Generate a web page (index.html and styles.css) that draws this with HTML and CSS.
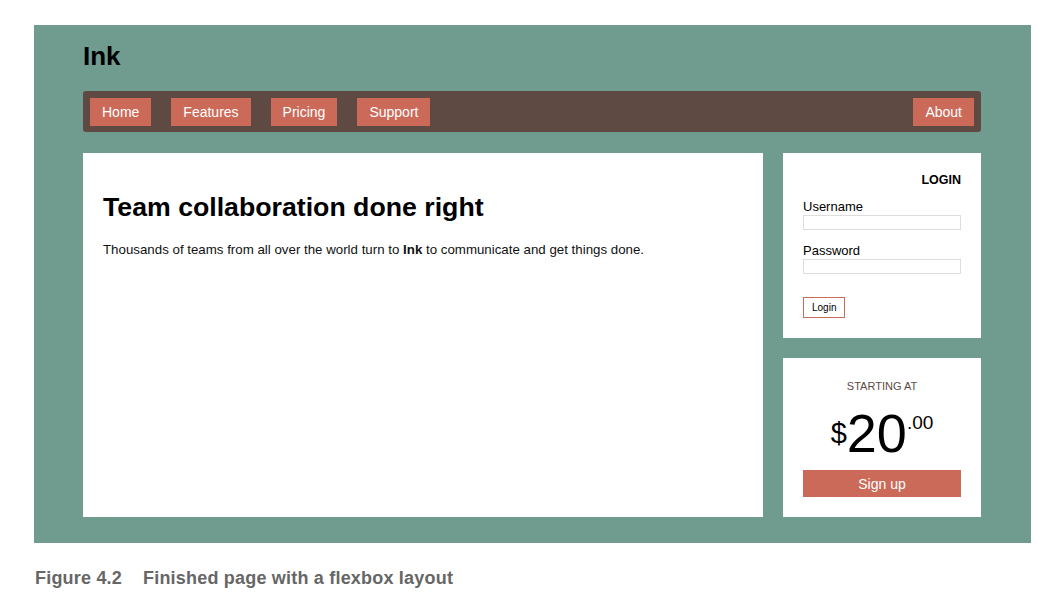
FILE: index.html
```html
<!DOCTYPE html>
<html>
<head>
<meta charset="utf-8">
<link rel="stylesheet" href="styles.css">
</head>
<body>
<div class="figure">
  <div class="page">
    <header class="site-header">
      <h1 class="logo">Ink</h1>
    </header>
    <nav class="nav">
      <a class="nav-btn">Home</a>
      <a class="nav-btn">Features</a>
      <a class="nav-btn">Pricing</a>
      <a class="nav-btn">Support</a>
      <a class="nav-btn nav-right">About</a>
    </nav>
    <div class="main-row">
      <main class="hero">
        <h2 class="hero-title">Team collaboration done right</h2>
        <p class="hero-text">Thousands of teams from all over the world turn to <b>Ink</b> to communicate and get things done.</p>
      </main>
      <aside class="sidebar">
        <div class="card login">
          <div class="login-title">LOGIN</div>
          <label class="field-label">Username</label>
          <div class="input"></div>
          <label class="field-label">Password</label>
          <div class="input"></div>
          <button class="login-btn">Login</button>
        </div>
        <div class="card pricing">
          <div class="starting">STARTING AT</div>
          <div class="price"><span class="cur">$</span><span class="amount">20</span><span class="cents">.00</span></div>
          <button class="signup">Sign up</button>
        </div>
      </aside>
    </div>
  </div>
  <div class="caption"><span class="fig-num">Figure 4.2</span>Finished page with a flexbox layout</div>
</div>
</body>
</html>
```
FILE: styles.css
```css
* { box-sizing: border-box; }
html, body { margin: 0; padding: 0; background: #fff; }
body { font-family: "Liberation Sans", Arial, sans-serif; color: #111; }

.figure { padding: 25px 0 0 34px; }

.page {
  width: 997px;
  height: 518px;
  background: #709b8f;
  padding: 0 50px 0 49px;
  display: flex;
  flex-direction: column;
}

.site-header { height: 66px; padding-top: 16px; }
.logo { margin: 0; font-size: 26px; font-weight: bold; line-height: 30px; color: #000; }

.nav {
  display: flex;
  gap: 20px;
  background: #5e4a43;
  border-radius: 3px;
  padding: 7px;
  height: 41px;
}
.nav-btn {
  background: #cc6a59;
  color: #fff;
  font-size: 14px;
  line-height: 28px;
  height: 28px;
  padding: 0 12px;
  display: block;
}
.nav-right { margin-left: auto; }

.main-row {
  display: flex;
  gap: 20px;
  margin-top: 21px;
  height: 364px;
}

.hero {
  flex: 1;
  background: #fff;
  padding: 37px 20px;
}
.hero-title { margin: 0; font-size: 26.7px; line-height: 34px; font-weight: bold; color: #000; }
.hero-text { margin: 17px 0 0; font-size: 13.3px; line-height: 18px; color: #111; }

.sidebar { width: 198px; display: flex; flex-direction: column; gap: 20px; }
.card { background: #fff; padding: 20px; }

.login { height: 185px; display: flex; flex-direction: column; }
.login-title { text-align: right; font-weight: bold; font-size: 12.5px; line-height: 16px; margin-top: -1px; color: #000; }
.field-label { font-size: 13px; line-height: 14px; margin-top: 12px; color: #000; }
.field-label + .input { margin-top: 1px; }
.input { height: 15px; border: 1px solid #ddd; width: 100%; flex: none; }
.input + .field-label { margin-top: 14px; }
.login-btn {
  align-self: flex-start;
  margin-top: 23px;
  height: 21px;
  padding: 0 8px;
  background: #fff;
  border: 1px solid #cc6a59;
  font-family: inherit;
  font-size: 10px;
  color: #000;
}

.pricing { flex: 1; text-align: center; padding-top: 22px; }
.starting { font-size: 11px; line-height: 13px; color: #5e4a43; }
.price { margin-top: 13px; height: 54px; line-height: 54px; color: #000; }
.amount { font-size: 54px; line-height: 54px; }
.cur { font-size: 29px; line-height: 0; vertical-align: 9px; }
.cents { font-size: 19px; line-height: 0; vertical-align: 23px; }
.signup {
  display: block;
  width: 100%;
  height: 27px;
  margin-top: 10px;
  border: 0;
  background: #cc6a59;
  color: #fff;
  font-family: inherit;
  font-size: 14px;
}

.caption {
  margin-top: 25px;
  padding-left: 1px;
  font-family: "Liberation Sans", Arial, sans-serif;
  font-weight: bold;
  font-size: 18px;
  letter-spacing: 0.2px;
  color: #666;
}
.fig-num { margin-right: 21px; }
```
